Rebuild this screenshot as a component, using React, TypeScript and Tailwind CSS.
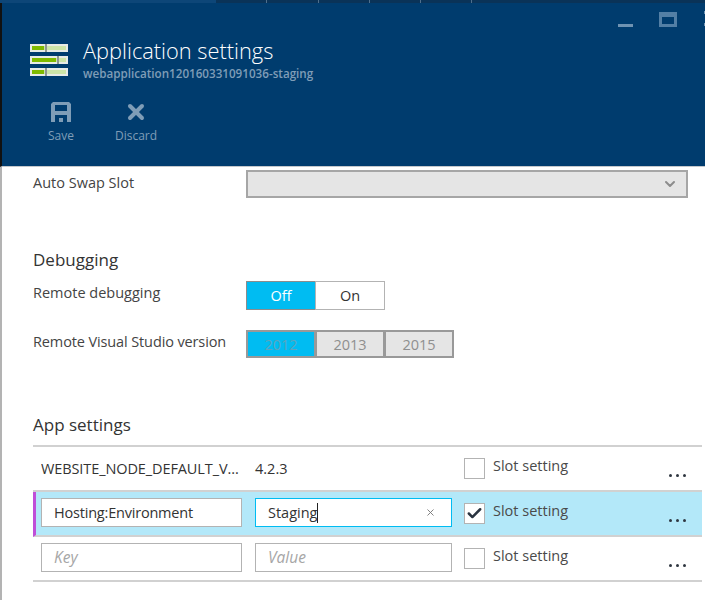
import { Check, ChevronDown, X } from 'lucide-react';

const font = { fontFamily: '"Open Sans", "Noto Sans", sans-serif' };

function SliderIcon() {
  const bars = [
    { y: 0, fill: 12, knob: 15 },
    { y: 12, fill: 24, knob: 27 },
    { y: 24, fill: 12, knob: 15 },
  ];
  return (
    <svg width="38" height="32" viewBox="0 0 38 32" className="shrink-0">
      {bars.map((b) => (
        <g key={b.y}>
          <rect x="0" y={b.y} width="38" height="8" fill="#e8ebe6" />
          <rect x="2" y={b.y + 2} width="34" height="4" fill="#cde5a8" />
          <rect x="2" y={b.y + 2} width={b.fill} height="4" fill="#7fba00" />
          <rect x={b.knob} y={b.y} width="2" height="8" fill="#8f9690" />
        </g>
      ))}
    </svg>
  );
}

function SaveIcon() {
  return (
    <svg width="20" height="20" viewBox="0 0 20 20">
      <path
        fillRule="evenodd"
        d="M2 0h16l2 2v18H0V2ZM4 3v6h12V3ZM4 13v7h4v-4h4v4h4v-7Z"
        fill="#7f9db7"
      />
    </svg>
  );
}

function Segment({ items, active, disabled }: { items: string[]; active: string; disabled?: boolean }) {
  return (
    <div className="flex">
      {items.map((item) => {
        const isOn = item === active;
        let cls = 'border bg-white text-[#333] border-[#b3b3b3]';
        if (isOn) cls = disabled ? 'border-2 bg-[#00bcf2] text-[#5aa5c0] border-[#999]' : 'border bg-[#00bcf2] text-white border-[#8c8c8c]';
        else if (disabled) cls = 'border-2 bg-[#e5e5e5] text-[#8f8f8f] border-[#999]';
        return (
          <div
            key={item}
            className={`flex items-center justify-center w-[70px] -ml-px first:ml-0 text-[14.5px] ${disabled ? 'h-[28px] pt-[2px]' : 'h-[29px]'} ${cls}`}
          >
            {item}
          </div>
        );
      })}
    </div>
  );
}

function SlotSetting({ checked }: { checked?: boolean }) {
  return (
    <div className="flex gap-2 items-start w-[222px] mt-[11px]">
      <div className="w-[21px] h-[21px] bg-white border border-[#b3b3b3] flex items-center justify-center">
        {checked && <Check size={17} strokeWidth={3.5} className="text-[#2a3440]" />}
      </div>
      <span className="text-[14.5px] leading-[17px] -mt-px text-[#4a4a4a]">Slot setting</span>
      <div className="flex gap-[4px] mt-[16px] ml-auto">
        <span className="w-[3px] h-[3px] rounded-full bg-[#2f3640]" />
        <span className="w-[3px] h-[3px] rounded-full bg-[#2f3640]" />
        <span className="w-[3px] h-[3px] rounded-full bg-[#2f3640]" />
      </div>
    </div>
  );
}

const inputCls = 'flex h-[29px] items-center bg-white border pl-[12px] mt-[6px]';

export default function App() {
  return (
    <div style={font} className="w-[705px] h-[600px] overflow-hidden bg-white flex flex-col">
      {/* portal tab strip */}
      <div className="flex h-[3px] shrink-0 bg-[#0a3358]">
        <div className="w-[216px] bg-[#0d4678]" />
        <div className="w-[50px]" />
        <div className="w-[52px] border-l border-[#4f6f8c]" />
        <div className="w-[51px] border-l border-[#4f6f8c]" />
        <div className="w-[51px] border-l border-[#4f6f8c]" />
        <div className="w-[51px] border-l border-[#4f6f8c]" />
        <div className="border-l border-[#4f6f8c]" />
      </div>

      <header className="relative h-[164px] shrink-0 bg-[#003c6e] border-l-2 border-[#111] border-b border-b-[#c4c8cc] pl-[28px]">
        <div className="absolute top-[9px] right-[28px] flex items-end gap-[26px]">
          <span className="w-[15px] h-[3px] bg-[#6f93b2]" />
          <span className="w-[18px] h-[15px] border-[3px] border-t-[5px] border-[#537fa5]" />
        </div>
        <div className="absolute top-[8px] right-0 flex flex-col gap-[9px]">
          <span className="w-px h-[3px] bg-[#6f93b2]" />
          <span className="w-px h-[3px] bg-[#6f93b2]" />
        </div>
        <div className="flex items-center gap-[15px] pt-[35px]">
          <SliderIcon />
          <div>
            <h1 className="text-[21.8px] leading-[26px] font-light text-white">Application settings</h1>
            <p className="text-[11.65px] leading-[16px] mt-[2px] font-semibold text-[#7f9db7]">webapplication120160331091036-staging</p>
          </div>
        </div>
        <div className="flex mt-[20px] text-[#7f9db7] text-[12px]">
          <div className="w-[66px] -ml-[2px] flex flex-col items-center gap-[5px]">
            <SaveIcon />
            <span>Save</span>
          </div>
          <div className="w-[84px] flex flex-col items-center gap-[5px]">
            <X size={24} strokeWidth={4} className="-my-[2px]" />
            <span>Discard</span>
          </div>
        </div>
      </header>

      <main className="flex-1 border-l-2 border-[#b3b3b3] pl-[31px] pr-[3px] text-[#444]">
        <div className="flex items-center mt-[2px] h-[29px]">
          <label className="w-[213px] text-[14.5px] -mt-[2px]">Auto Swap Slot</label>
          <div className="w-[442px] h-[28px] bg-[#e5e5e5] border-2 border-[#a6a6a6] flex items-center justify-end pr-[8px]">
            <ChevronDown size={16} strokeWidth={3} className="text-[#8c8c8c]" />
          </div>
        </div>

        <h2 className="mt-[50px] text-[17px] leading-[24px] text-[#333]">Debugging</h2>
        <div className="flex mt-[9px]">
          <label className="w-[213px] text-[14.5px] leading-[24px]">Remote debugging</label>
          <Segment items={['Off', 'On']} active="Off" />
        </div>
        <div className="flex mt-[20px]">
          <label className="w-[213px] text-[14.5px] leading-[24px] tracking-[-0.12px]">Remote Visual Studio version</label>
          <Segment items={['2012', '2013', '2015']} active="2012" disabled />
        </div>

        <h2 className="mt-[55px] text-[17px] leading-[24px] text-[#333]">App settings</h2>

        <div className="mt-[8px] border-t-2 border-[#d1d1d1]">
          <div className="flex h-[45px] pl-[8px] border-b-2 border-[#d1d1d1]">
            <span className="w-[214px] mt-[11px] text-[14.5px] leading-[22px] text-[#333] tracking-[-0.1px] truncate">WEBSITE_NODE_DEFAULT_V...</span>
            <span className="w-[209px] mt-[11px] text-[14.5px] leading-[22px] text-[#333]">4.2.3</span>
            <SlotSetting />
          </div>
          <div className="flex h-[45px] bg-[#b3e8f9] pl-[5px] border-b-2 border-b-[#d1d1d1] border-l-[3px] border-l-[#c04fd8]">
            <div className={`${inputCls} w-[201px] border-[#b3b3b3] text-[14.5px] tracking-[-0.2px] text-[#333]`}>Hosting:Environment</div>
            <div className={`${inputCls} w-[197px] ml-[13px] border-[#00bcf2] text-[14.5px] text-[#333]`}>
              <span className="border-r border-[#222] leading-[20px]">Staging</span>
              <X size={11} className="ml-auto mr-[15px] text-[#777]" />
            </div>
            <div className="ml-[12px]"><SlotSetting checked /></div>
          </div>
          <div className="flex h-[45px] pl-[8px] border-b-2 border-[#d1d1d1]">
            <div className={`${inputCls} w-[201px] border-[#b3b3b3] text-[15.5px] italic text-[#a6a6a6]`}>Key</div>
            <div className={`${inputCls} w-[197px] ml-[13px] border-[#b3b3b3] text-[15.5px] italic text-[#a6a6a6]`}>Value</div>
            <div className="ml-[12px]"><SlotSetting /></div>
          </div>
        </div>
      </main>
    </div>
  );
}
